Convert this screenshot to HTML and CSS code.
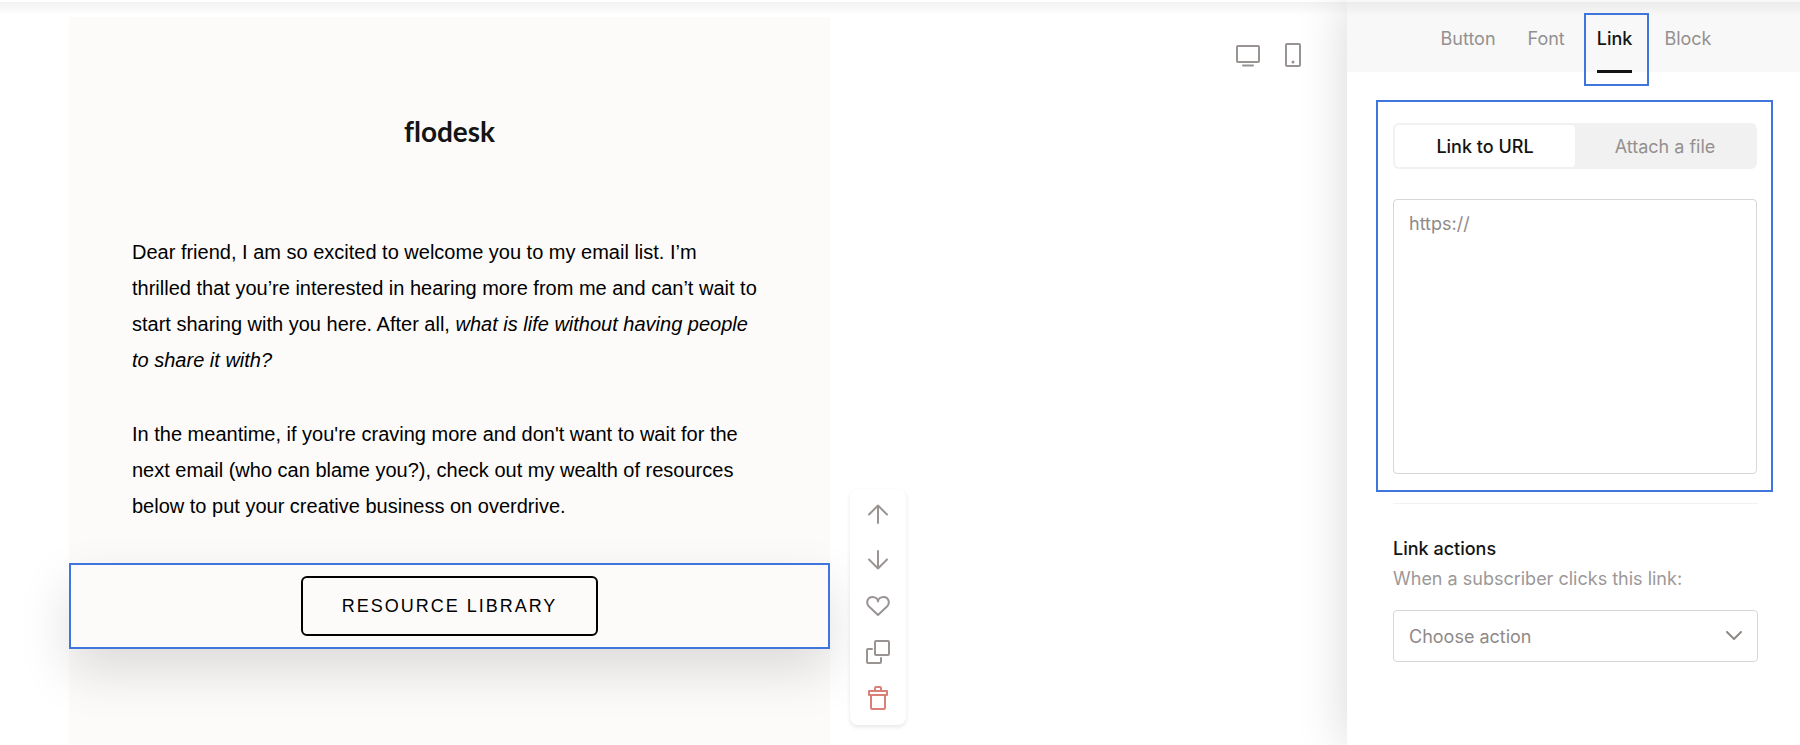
FILE: index.html
```
<!DOCTYPE html>
<html lang="en">
<head>
<meta charset="UTF-8">
<meta name="viewport" content="width=device-width, initial-scale=1.0">
<title>Email editor</title>
<link rel="stylesheet" href="styles.css">
</head>
<body>
<div class="editor">
    <main class="stage">
        <div class="email">
            <div class="logo">flodesk</div>
            <div class="copy">
                <p>Dear friend, I am so excited to welcome you to my email list. I’m<br>
                thrilled that you’re interested in hearing more from me and can’t wait to<br>
                start sharing with you here. After all, <em>what is life without having people</em><br>
                <em>to share it with?</em></p>
                <p>In the meantime, if you're craving more and don't want to wait for the<br>
                next email (who can blame you?), check out my wealth of resources<br>
                below to put your creative business on overdrive.</p>
            </div>
            <div class="block-selected">
                <button class="cta" type="button">RESOURCE LIBRARY</button>
            </div>
        </div>

        <div class="block-tools">
            <button type="button" aria-label="Move up">
                <svg width="24" height="24" viewBox="0 0 24 24"><path d="M12 21V3.500M3 12.500l9-9 9 9"/></svg>
            </button>
            <button type="button" aria-label="Move down">
                <svg width="24" height="24" viewBox="0 0 24 24"><path d="M12 3v17.500M3 11.500l9 9 9-9"/></svg>
            </button>
            <button type="button" aria-label="Favorite">
                <svg width="24" height="24" viewBox="0 0 24 24"><path d="M12 21L3 12.500C-.5 9 1.500 3 6.500 3 9.500 3 12 5 12 7.500 12 5 14.500 3 17.500 3c5 0 7 6 3.500 9.500z"/></svg>
            </button>
            <button type="button" aria-label="Duplicate">
                <svg width="24" height="24" viewBox="0 0 24 24"><rect x="9" y="1" width="14" height="14" rx="1"/><path d="M6 9H2a1 1 0 0 0-1 1v12a1 1 0 0 0 1 1h12a1 1 0 0 0 1-1v-4"/></svg>
            </button>
            <button class="delete" type="button" aria-label="Delete">
                <svg width="24" height="24" viewBox="0 0 24 24"><path d="M3 5h18v4H3zM5 9v13a1 1 0 0 0 1 1h12a1 1 0 0 0 1-1V9M9 5V2a1 1 0 0 1 1-1h4a1 1 0 0 1 1 1v3"/></svg>
            </button>
        </div>

        <div class="view-tools">
            <button type="button" aria-label="Desktop view">
                <svg width="24" height="24" viewBox="0 0 24 24"><rect x="1" y="3" width="22" height="16" rx="1"/><path d="M7 22.500h10"/></svg>
            </button>
            <button type="button" aria-label="Mobile view">
                <svg width="24" height="24" viewBox="0 0 24 24"><rect x="5" y="1" width="14" height="22" rx="1"/><circle class="dot" cx="12" cy="19" r="1.500"/></svg>
            </button>
        </div>
    </main>

    <aside class="panel">
        <nav class="tabs">
            <button type="button">Button</button>
            <button type="button">Font</button>
            <button class="active" type="button">Link</button>
            <button type="button">Block</button>
        </nav>

        <section class="link-box">
            <div class="segmented">
                <button class="active" type="button">Link to URL</button>
                <button type="button">Attach a file</button>
            </div>
            <textarea class="url" aria-label="Link URL" placeholder="https://"></textarea>
        </section>

        <section class="actions">
            <label for="action">Link actions</label>
            <p>When a subscriber clicks this link:</p>
            <div class="select">
                <select id="action">
                    <option>Choose action</option>
                </select>
                <svg width="16" height="10" viewBox="0 0 16 10"><path d="M1 1l7 7 7-7"/></svg>
            </div>
        </section>
    </aside>
</div>
</body>
</html>
```

FILE: styles.css
```
* {
    box-sizing: border-box;
}

body {
    margin: 0;
    background: #fff;
    font-family: Inter, "Liberation Sans", sans-serif;
    font-size: 18px;
    color: #141414;
}

button {
    padding: 0;
    border: none;
    background: none;
    font: inherit;
    color: inherit;
    cursor: pointer;
}

svg {
    display: block;
    fill: none;
    stroke: currentColor;
    stroke-width: 2;
    stroke-linecap: round;
    stroke-linejoin: round;
}

.editor {
    position: relative;
    display: flex;
    min-height: 100vh;
}

/* shadow cast by the top bar */
.editor::before {
    content: "";
    position: absolute;
    z-index: 2;
    top: 2px;
    left: 0;
    right: 0;
    height: 14px;
    background: linear-gradient(rgba(0, 0, 0, 0.05), rgba(0, 0, 0, 0));
    pointer-events: none;
}

.stage {
    flex: 1;
    display: flex;
    align-items: flex-start;
    padding: 17px 42px 0 69px;
}

.email {
    width: 761px;
    min-height: calc(100vh - 17px);
    background: #fcfbf9;
}

.logo {
    padding-top: 94px;
    font-family: Lato, sans-serif;
    font-size: 28px;
    line-height: 40px;
    font-weight: 700;
    font-variant-ligatures: none;
    text-align: center;
}

.copy {
    padding: 83px 0 39px 63px;
    font-family: "Liberation Sans", Arial, sans-serif;
    font-size: 20px;
    line-height: 36px;
    color: #000;
}

.copy p {
    margin: 0;
}

.copy p + p {
    margin-top: 38px;
}

.block-selected {
    display: flex;
    justify-content: center;
    padding: 11px;
    border: 2px solid #3f76dd;
    background: #fcfbf9;
    box-shadow: 0 22px 52px rgba(0, 0, 0, 0.13);
}

.cta {
    height: 60px;
    padding: 0 39px;
    border: 2px solid #000;
    border-radius: 6px;
    font-family: "Liberation Sans", Arial, sans-serif;
    letter-spacing: 2px;
    color: #000;
}

.block-tools {
    position: relative;
    display: flex;
    flex-direction: column;
    gap: 22px;
    margin: 472px 0 0 20px;
    padding: 13px 16px 15px;
    border-radius: 8px;
    background: #fff;
    box-shadow: 0 2px 4px rgba(0, 0, 0, 0.1);
    color: #999492;
}

.block-tools .delete {
    color: #d98079;
}

.view-tools {
    display: flex;
    gap: 21px;
    margin: 26px 0 0 auto;
    color: #999492;
}

.dot {
    fill: currentColor;
    stroke: none;
}

.panel {
    width: 453px;
    background: #fff;
    box-shadow: 0 0 48px rgba(0, 0, 0, 0.16);
}

.tabs {
    display: flex;
    justify-content: center;
    gap: 32px;
    height: 72px;
    padding: 13px 0 0 5px;
    background: #f8f8f8;
    color: #949090;
}

.tabs button {
    height: 50px;
}

.tabs .active {
    position: relative;
    font-weight: 500;
    color: #141414;
}

/* highlight frame round the current tab */
.tabs .active::before {
    content: "";
    position: absolute;
    top: 0;
    bottom: -23px;
    left: -13px;
    right: -17px;
    border: 2px solid #3f76dd;
}

.tabs .active::after {
    content: "";
    position: absolute;
    left: 0;
    right: 0;
    bottom: -10px;
    height: 3px;
    background: #141414;
}

.link-box {
    margin: 28px 27px 0 29px;
    padding: 21px 14px 16px 15px;
    border: 2px solid #3f76dd;
}

.segmented {
    display: grid;
    grid-template-columns: 1fr 1fr;
    height: 46px;
    padding: 2px;
    border-radius: 6px;
    background: #f1f1f1;
    color: #949090;
}

.segmented .active {
    border-radius: 4px;
    background: #fff;
    font-weight: 500;
    color: #141414;
}

.url {
    display: block;
    width: 100%;
    height: 275px;
    margin-top: 30px;
    padding: 13px 15px;
    border: 1px solid #d8d6d6;
    border-radius: 4px;
    font: inherit;
    resize: none;
}

.url::placeholder {
    color: #8f8a88;
}

.actions {
    margin: 11px 42px 0 46px;
    padding-top: 30px;
    border-top: 1px solid #f2f2f2;
}

.actions label {
    display: block;
    line-height: 30px;
    font-weight: 500;
}

.actions p {
    margin: 0 0 16px;
    line-height: 30px;
    color: #9c9898;
}

.select {
    position: relative;
}

.select select {
    width: 100%;
    height: 52px;
    padding: 0 15px;
    border: 1px solid #d8d6d6;
    border-radius: 4px;
    background: #fff;
    font: inherit;
    color: #8f8a88;
    appearance: none;
}

.select svg {
    position: absolute;
    top: 21px;
    right: 16px;
    color: #8f8a88;
    pointer-events: none;
}
```
